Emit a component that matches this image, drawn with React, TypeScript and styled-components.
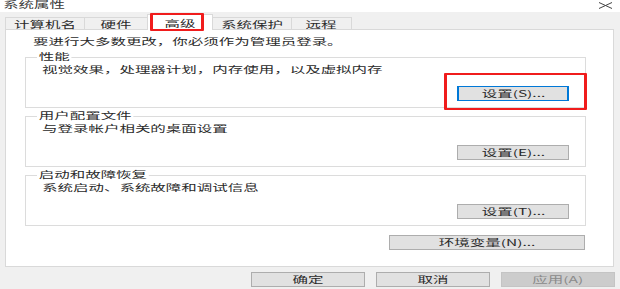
import React from 'react';
import styled, { createGlobalStyle } from 'styled-components';

const Global = createGlobalStyle`
  html, body { margin: 0; padding: 0; background: #f0f0f0; }
  body { font-family: "Noto Sans CJK SC", "Noto Sans", sans-serif; }
  #root { width: 620px; height: 289px; overflow: hidden; }
`;

const Window = styled.div`
  width: 620px;
  height: 289px;
  background: #f0f0f0;
  display: flex;
  flex-direction: column;
  color: #2a2a2a;
  font-size: 9px;
  line-height: 10px;
  overflow: hidden;
`;

const TitleBar = styled.div`
  height: 12px;
  flex: none;
  background: #fff;
  display: flex;
  justify-content: space-between;
  align-items: flex-start;
  padding: 0 7px 0 3px;
`;

const TitleText = styled.div`
  color: #3a3a3a;
`;

const CloseIcon = styled.svg`
  margin-top: 2px;
  flex: none;
`;

const Label = styled.span<{ $origin?: 'left' | 'center' }>`
  display: inline-block;
  white-space: nowrap;
  transform: scaleX(1.72);
  transform-origin: ${(p) => (p.$origin === 'center' ? 'center' : 'left')} center;
`;

const TabStrip = styled.div`
  flex: none;
  display: flex;
  align-items: flex-end;
  height: 12px;
  margin-top: 5px;
  padding-left: 6px;
`;

const Tab = styled.div<{ $w: number; $active?: boolean }>`
  position: relative;
  width: ${(p) => p.$w}px;
  height: ${(p) => (p.$active ? 16 : 12)}px;
  margin-left: -1px;
  margin-bottom: ${(p) => (p.$active ? -1 : 0)}px;
  z-index: ${(p) => (p.$active ? 1 : 0)};
  box-sizing: border-box;
  border: 1px solid #d9d9d9;
  border-bottom: none;
  background: ${(p) => (p.$active ? '#fff' : '#f0f0f0')};
  display: flex;
  justify-content: center;
  align-items: flex-start;
  padding-top: ${(p) => (p.$active ? 4 : 2)}px;
`;

const RedMark = styled.div<{ $l: number; $t: number; $w: number; $h: number }>`
  position: absolute;
  left: ${(p) => p.$l}px;
  top: ${(p) => p.$t}px;
  width: ${(p) => p.$w}px;
  height: ${(p) => p.$h}px;
  box-sizing: border-box;
  border: 2px solid #f01c1c;
  border-left-width: 3px;
  border-right-width: 3px;
  border-radius: 1px;
  pointer-events: none;
`;

const Panel = styled.div`
  flex: none;
  margin-left: 5px;
  width: 609px;
  height: 238px;
  box-sizing: border-box;
  border: 1px solid #d9d9d9;
  background: #fff;
  padding: 7px 27px 0 19px;
  display: flex;
  flex-direction: column;
`;

const Intro = styled.div`
  margin-left: 8px;
  height: 10px;
  margin-bottom: 2px;
`;

const Group = styled.div`
  position: relative;
  margin-top: 8px;
  border: 1px solid #dcdcdc;
  padding: 0 16px 6px;
  display: flex;
  flex-direction: column;
`;

const Legend = styled.div`
  align-self: flex-start;
  margin: -6px 0 0 -7px;
  height: 10px;
  padding: 0 2px;
`;

const LegendText = styled(Label)`
  background: #fff;
  padding: 0 1px;
`;

const Desc = styled.div`
  margin-top: 3px;
  height: 10px;
`;

const ButtonSlot = styled.div`
  position: relative;
  align-self: flex-end;
  margin-top: 11px;
`;

const Button = styled.button<{ $w: number; $focused?: boolean; $disabled?: boolean }>`
  width: ${(p) => p.$w}px;
  height: 15px;
  box-sizing: border-box;
  padding: 0;
  margin: 0;
  font: inherit;
  line-height: 10px;
  color: ${(p) => (p.$disabled ? '#8a8a8a' : '#2a2a2a')};
  background: ${(p) => (p.$disabled ? '#cccccc' : '#e1e1e1')};
  border: 1px solid ${(p) => (p.$focused ? '#0078d7' : p.$disabled ? '#c4c4c4' : '#adadad')};
  border-left-width: ${(p) => (p.$focused ? 2 : 1)}px;
  border-right-width: ${(p) => (p.$focused ? 2 : 1)}px;
  display: flex;
  align-items: center;
  justify-content: center;
`;

const EnvSlot = styled.div`
  align-self: flex-end;
  margin-top: 9px;
  margin-right: 1px;
`;

const Footer = styled.div`
  flex: none;
  display: flex;
  justify-content: flex-end;
  gap: 11px;
  padding-right: 5px;
  margin-top: 5px;
`;

const tabs = [
  { t: '计算机名', w: 80 },
  { t: '硬件', w: 64 },
  { t: '高级', w: 66, active: true },
  { t: '系统保护', w: 80 },
  { t: '远程', w: 61 },
];

export default function App() {
  return (
    <>
      <Global />
      <Window>
        <TitleBar>
          <TitleText>
            <Label>系统属性</Label>
          </TitleText>
          <CloseIcon width="15" height="7" viewBox="0 0 15 7">
            <path d="M1 0.5 L14 6.5 M1 6.5 L14 0.5" stroke="#444" strokeWidth="1" fill="none" />
          </CloseIcon>
        </TitleBar>

        <TabStrip>
          {tabs.map((tab) => (
            <Tab key={tab.t} $w={tab.w} $active={tab.active}>
              <Label $origin="center">{tab.t}</Label>
              {tab.active && <RedMark $l={2} $t={-2} $w={54} $h={18} />}
            </Tab>
          ))}
        </TabStrip>

        <Panel>
          <Intro>
            <Label>要进行大多数更改，你必须作为管理员登录。</Label>
          </Intro>

          <Group>
            <Legend>
              <LegendText>性能</LegendText>
            </Legend>
            <Desc>
              <Label>视觉效果，处理器计划，内存使用，以及虚拟内存</Label>
            </Desc>
            <ButtonSlot>
              <Button $w={112} $focused>
                <Label $origin="center">设置(S)...</Label>
              </Button>
              <RedMark $l={-13} $t={-13} $w={143} $h={37} />
            </ButtonSlot>
          </Group>

          <Group>
            <Legend>
              <LegendText>用户配置文件</LegendText>
            </Legend>
            <Desc>
              <Label>与登录帐户相关的桌面设置</Label>
            </Desc>
            <ButtonSlot>
              <Button $w={112}>
                <Label $origin="center">设置(E)...</Label>
              </Button>
            </ButtonSlot>
          </Group>

          <Group>
            <Legend>
              <LegendText>启动和故障恢复</LegendText>
            </Legend>
            <Desc>
              <Label>系统启动、系统故障和调试信息</Label>
            </Desc>
            <ButtonSlot>
              <Button $w={112}>
                <Label $origin="center">设置(T)...</Label>
              </Button>
            </ButtonSlot>
          </Group>

          <EnvSlot>
            <Button $w={196}>
              <Label $origin="center">环境变量(N)...</Label>
            </Button>
          </EnvSlot>
        </Panel>

        <Footer>
          <Button $w={114}>
            <Label $origin="center">确定</Label>
          </Button>
          <Button $w={114}>
            <Label $origin="center">取消</Label>
          </Button>
          <Button $w={114} $disabled>
            <Label $origin="center">应用(A)</Label>
          </Button>
        </Footer>
      </Window>
    </>
  );
}
